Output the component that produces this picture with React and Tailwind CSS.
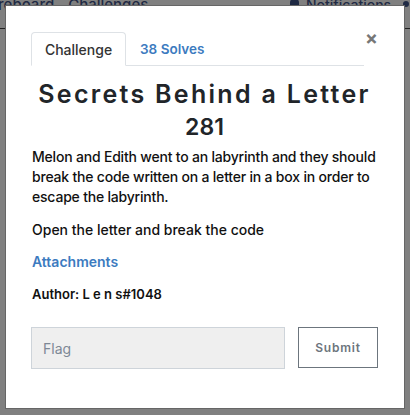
import React from "react";

export default function App() {
  const font = { fontFamily: "Inter, 'Open Sans', sans-serif" };
  return (
    <div className="relative w-[410px] h-[415px] overflow-hidden bg-[#808080]" style={font}>
      {/* backdrop navbar */}
      <div className="relative h-[29px] border-b border-[#222]">
        <div className="absolute left-[-11px] top-[-6px] flex gap-[14px] text-[15px] font-medium text-[#1f2a44]">
          <span>oreboard</span>
          <span>Challenges</span>
        </div>
        <div className="absolute left-[290px] top-[-6px] flex items-center gap-[7px] text-[14px] font-medium text-[#1f2a44]">
          <span className="w-[9px] h-[13px] rounded-full bg-[#1f2a44]"></span>
          <span>Notifications</span>
        </div>
        <div className="absolute left-[403px] top-[1px] w-[6px] h-[6px] rounded-full bg-[#1f2a44]"></div>
      </div>

      {/* modal */}
      <div className="absolute left-[5px] top-[5px] w-[400px] h-[404px] bg-white border border-[#666]">
        <div className="pl-[25px] pr-[26px] pt-[26px]">
          <div className="flex items-start">
            <div className="flex flex-1 border-b border-[#dee2e6] h-[34px]">
              <div className="w-[95px] h-[34px] pt-[1px] border border-[#dee2e6] border-b-white rounded-t-[4px] bg-white flex items-center justify-center text-[14px] font-medium text-[#333]">
                Challenge
              </div>
              <div className="px-[14px] pt-[1px] flex items-center text-[13.5px] font-semibold text-[#3c7bbf]">
                38 Solves
              </div>
            </div>
            <button className="w-[14px] -mt-[3px] text-[19px] leading-[20px] font-bold text-[#777] text-right">
              ×
            </button>
          </div>

          <h1 className="mt-[10px] text-center text-[25px] leading-[36px] font-semibold tracking-[2.3px] text-[#212529]">
            Secrets Behind a Letter
          </h1>
          <div className="text-center text-[23px] leading-[30px] font-semibold text-[#212529]">281</div>

          <p className="mt-[5px] pl-[1px] text-[14px] leading-[20px] font-medium tracking-[-0.2px] whitespace-nowrap text-[#111]">
            Melon and Edith went to an labyrinth and they should
            <br />
            break the code written on a letter in a box in order to
            <br />
            escape the labyrinth.
          </p>
          <p className="mt-[13px] pl-[1px] text-[14px] leading-[20px] font-medium text-[#111]">
            Open the letter and break the code
          </p>
          <div className="mt-[12px] pl-[1px] text-[14px] leading-[20px] font-semibold text-[#3c7bbf]">Attachments</div>
          <div className="mt-[12px] pl-[1px] text-[13px] leading-[20px] font-semibold text-[#111]">Author: L e n s#1048</div>

          <div className="mt-[23px] flex gap-[13px]">
            <div className="w-[254px] h-[42px] bg-[#efefef] border border-[#ced4da] flex items-center pl-[11px] text-[14px] text-[#7d8896]">
              Flag
            </div>
            <button className="w-[80px] h-[41px] border border-[#6c757d] flex items-center justify-center text-[12px] font-semibold tracking-[0.8px] text-[#6c757d]">
              Submit
            </button>
          </div>
        </div>
      </div>
    </div>
  );
}
